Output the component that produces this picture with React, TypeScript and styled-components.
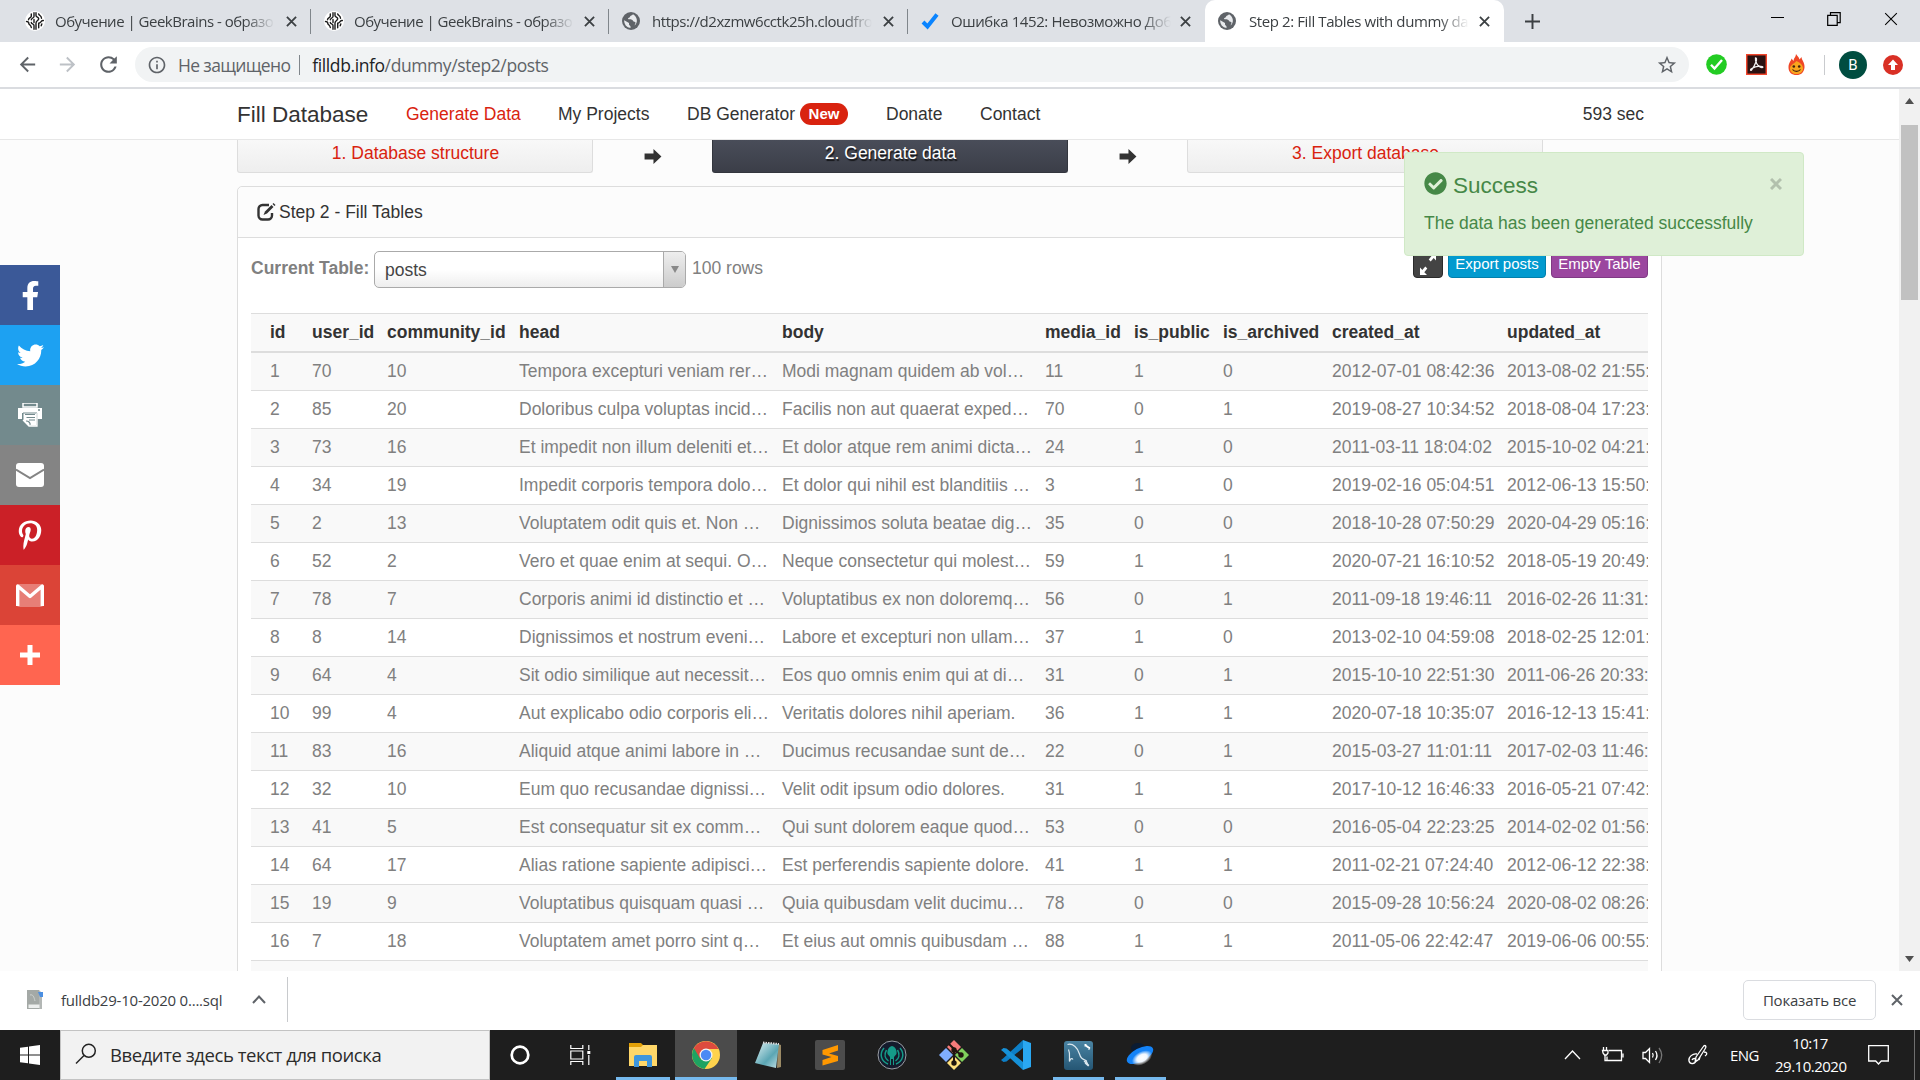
import React from "react";
import styled, { createGlobalStyle } from "styled-components";
import { FaFacebookF, FaTwitter, FaPinterestP, FaCheckCircle } from "react-icons/fa";
import { MdStarBorder, MdRefresh, MdArrowBack, MdArrowForward, MdInfoOutline } from "react-icons/md";

const ui = `"Open Sans", "Noto Sans", sans-serif`;
const web = `"Liberation Sans", Arial, sans-serif`;

const Global = createGlobalStyle`
  * { box-sizing: border-box; }
  body { margin: 0; overflow: hidden; }
  svg { display: block; flex: none; }
`;

const Screen = styled.div`
  width: 1920px;
  height: 1080px;
  display: flex;
  flex-direction: column;
  overflow: hidden;
  background: #fff;
  font-family: ${ui};
`;

/* ---------- browser chrome ---------- */
const TabStrip = styled.div`
  height: 42px;
  flex: none;
  display: flex;
  background: #dee1e6;
  padding-left: 12px;
`;
const Tab = styled.div<{ $active?: boolean; $line?: boolean; $w: number }>`
  width: ${(p) => p.$w}px;
  height: 42px;
  display: flex;
  align-items: center;
  padding: 0 8px 0 13px;
  background: ${(p) => (p.$active ? "#fff" : "transparent")};
  border-radius: 10px 10px 0 0;
  position: relative;
  &::after {
    content: "";
    display: ${(p) => (p.$line ? "block" : "none")};
    position: absolute;
    right: 0;
    top: 9px;
    width: 1px;
    height: 25px;
    background: #80868b;
  }
`;
const TabTitle = styled.div<{ $ls: number; $gap: number }>`
  width: 220px;
  margin-left: ${(p) => p.$gap}px;
  overflow: hidden;
  white-space: nowrap;
  font-size: 15px;
  line-height: 22px;
  letter-spacing: ${(p) => p.$ls}px;
  color: #3c4043;
  mask-image: linear-gradient(to right, #000 190px, transparent 220px);
`;
const TabClose = styled.div`
  margin-left: auto;
  padding-right: 6px;
`;
const NewTab = styled.div`
  display: flex;
  align-items: center;
  padding-left: 21px;
`;
const WindowButtons = styled.div`
  margin-left: auto;
  display: flex;
  align-items: center;
  gap: 43px;
  height: 37px;
  padding-right: 22px;
`;
const Toolbar = styled.div`
  height: 47px;
  flex: none;
  display: flex;
  align-items: center;
  border-bottom: 2px solid #dadce0;
  padding: 0 16px;
  background: #fff;
`;
const NavIcons = styled.div`
  display: flex;
  align-items: center;
  gap: 17px;
  width: 119px;
  color: #5f6368;
`;
const UrlBox = styled.div`
  width: 1554px;
  height: 35px;
  border-radius: 18px;
  background: #f1f3f4;
  display: flex;
  align-items: center;
  padding: 0 12px 0 12px;
  font-size: 17.5px;
  line-height: 24px;
  color: #5f6368;
  white-space: nowrap;
`;
const Secure = styled.span`
  margin-left: 11px;
  letter-spacing: -0.65px;
`;
const UrlLine = styled.i`
  width: 1px;
  height: 20px;
  background: #80868b;
  margin: 0 12px 0 9px;
`;
const Url = styled.span`
  letter-spacing: -0.4px;
  b { font-weight: 400; color: #202124; }
`;
const UrlStar = styled.div`
  margin-left: auto;
  margin-right: -1px;
`;
const Extensions = styled.div`
  margin-left: 17px;
  display: flex;
  align-items: center;
`;
const ExtLine = styled.i`
  width: 1px;
  height: 20px;
  background: #c9cbce;
  margin: 0 14px 0 19px;
`;
const Avatar = styled.div`
  width: 28px;
  height: 28px;
  border-radius: 50%;
  background: #004d40;
  color: #fff;
  font: 15px/28px Roboto, sans-serif;
  text-align: center;
  margin-right: 16px;
`;

/* ---------- page ---------- */
const Viewport = styled.div`
  height: 882px;
  flex: none;
  display: flex;
  position: relative;
  overflow: hidden;
  font-family: ${web};
  font-size: 17.5px;
  line-height: 25px;
  color: #808080;
  background: #fcfcfc;
`;
const Page = styled.div`
  width: 1899px;
  height: 882px;
  overflow: hidden;
`;
const SiteNav = styled.div`
  height: 51px;
  background: #fff;
  border-bottom: 1px solid #e7e7e7;
  display: flex;
  align-items: center;
  padding: 0 255px 0 237px;
  color: #333;
  white-space: nowrap;
`;
const Brand = styled.div`
  font-size: 22.5px;
  width: 169px;
`;
const NavLink = styled.div<{ $w: number; $on?: boolean }>`
  width: ${(p) => p.$w}px;
  display: flex;
  align-items: center;
  color: ${(p) => (p.$on ? "#d9230f" : "#333")};
`;
const Badge = styled.span`
  background: #d9230f;
  color: #fff;
  font-size: 15px;
  font-weight: 700;
  line-height: 22px;
  width: 48px;
  text-align: center;
  border-radius: 12px;
  margin-left: 5px;
`;
const Timer = styled.div`
  margin-left: auto;
`;
const Steps = styled.div`
  display: flex;
  align-items: center;
  padding-left: 237px;
  height: 33px;
`;
const Step = styled.div<{ $dark?: boolean }>`
  width: 356px;
  height: 33px;
  padding: 0 0 6px 1px;
  display: flex;
  align-items: center;
  justify-content: center;
  border: 1px solid ${(p) => (p.$dark ? "#33363e" : "#ddd")};
  border-top: 0;
  border-radius: 0 0 3px 3px;
  color: ${(p) => (p.$dark ? "#fff" : "#d9230f")};
  text-shadow: ${(p) => (p.$dark ? "1px 2px 1px rgba(0,0,0,.7)" : "none")};
  background: ${(p) =>
    p.$dark ? "linear-gradient(#494d59, #3b3e48)" : "linear-gradient(#f8f8f8, #eee)"};
`;
const StepArrow = styled.div`
  width: 119px;
  padding-left: 51px;
`;
const Panel = styled.div`
  width: 1425px;
  height: 800px;
  margin: 13px 0 0 237px;
  border: 1px solid #ddd;
  border-radius: 5px;
  background: #fff;
`;
const PanelHead = styled.div`
  height: 51px;
  display: flex;
  align-items: center;
  padding-left: 19px;
  gap: 3px;
  background: #fcfcfc;
  border-bottom: 1px solid #ddd;
  border-radius: 5px 5px 0 0;
  color: #333;
`;
const Controls = styled.div`
  height: 75px;
  padding: 13px 13px 0 13px;
  display: flex;
  align-items: flex-start;
`;
const TableLabel = styled.b`
  width: 123px;
  line-height: 34px;
  white-space: nowrap;
`;
const Select = styled.div`
  width: 312px;
  height: 37px;
  display: flex;
  border: 1px solid #aaa;
  border-radius: 5px;
  overflow: hidden;
  color: #444;
  background: linear-gradient(#fff 50%, #eee);
`;
const SelectValue = styled.div`
  flex: 1;
  padding-left: 10px;
  line-height: 36px;
`;
const SelectArrow = styled.div`
  width: 22px;
  border-left: 1px solid #aaa;
  background: linear-gradient(#eee, #ccc);
  display: flex;
  align-items: center;
  justify-content: center;
`;
const RowCount = styled.span`
  margin-left: 6px;
  line-height: 34px;
`;
const Actions = styled.div`
  margin-left: auto;
  display: flex;
  gap: 5px;
`;
const Action = styled.div<{ $bg: string; $edge: string; $w: number }>`
  width: ${(p) => p.$w}px;
  height: 27px;
  border-radius: 4px;
  border: 1px solid ${(p) => p.$edge};
  background: ${(p) => p.$bg};
  color: #fff;
  font-size: 15px;
  line-height: 22px;
  padding-bottom: 2px;
  display: flex;
  align-items: center;
  justify-content: center;
  white-space: nowrap;
`;
const TableWrap = styled.div`
  width: 1397px;
  margin-left: 13px;
  overflow: hidden;
`;
const DataTable = styled.table`
  table-layout: fixed;
  width: 1429px;
  border-spacing: 0;
  th, td {
    padding: 6px 0 6px 6px;
    text-align: left;
    white-space: nowrap;
    height: 38px;
    line-height: 25px;
    border-bottom: 1px solid #ddd;
  }
  th:first-child, td:first-child { padding-left: 19px; }
  th {
    height: 40px;
    color: #333;
    background: #f9f9f9;
    border-top: 1px solid #ddd;
    border-bottom: 2px solid #ddd;
  }
  tbody tr:nth-child(odd) td { background: #f9f9f9; }
`;
const Scroll = styled.div`
  width: 21px;
  background: #f1f1f1;
  display: flex;
  flex-direction: column;
  align-items: center;
  padding: 9px 0 9px;
`;
const Thumb = styled.div`
  width: 17px;
  height: 175px;
  margin-top: 21px;
  margin-bottom: auto;
  background: #c1c1c1;
`;
const Share = styled.div`
  position: absolute;
  left: 0;
  top: 176px;
  width: 60px;
`;
const ShareItem = styled.div<{ $bg: string }>`
  height: 60px;
  background: ${(p) => p.$bg};
  color: #fff;
  display: flex;
  align-items: center;
  justify-content: center;
`;
const Alert = styled.div`
  position: absolute;
  left: 1404px;
  top: 63px;
  width: 400px;
  height: 104px;
  padding: 18px 18px 0 19px;
  border: 1px solid #d0e9c6;
  border-radius: 4px;
  background: #dff0d8;
  color: #468847;
  white-space: nowrap;
`;
const AlertTitle = styled.div`
  display: flex;
  align-items: center;
  font-size: 22.5px;
  height: 26px;
  line-height: 30px;
  span { margin: 3px auto 0 6px; }
  svg:first-child { margin-bottom: 2px; }
  svg:last-child { margin-right: 3px; }
`;
const AlertText = styled.div`
  margin-top: 14px;
`;

/* ---------- download shelf ---------- */
const Shelf = styled.div`
  height: 59px;
  flex: none;
  display: flex;
  align-items: center;
  background: #fff;
  padding: 0 17px 2px 26px;
  font-size: 15px;
  color: #3c4043;
`;
const FileName = styled.div`
  width: 191px;
  margin-left: 18px;
  letter-spacing: -0.22px;
  white-space: nowrap;
`;
const ShelfLine = styled.i`
  width: 1px;
  height: 45px;
  margin-left: 21px;
  background: #c8cacd;
`;
const ShowAll = styled.div`
  margin-left: auto;
  margin-right: 15px;
  width: 133px;
  height: 40px;
  border: 1px solid #dadce0;
  border-radius: 5px;
  line-height: 38px;
  text-align: center;
  font-weight: 500;
  letter-spacing: -0.2px;
  white-space: nowrap;
`;

/* ---------- taskbar ---------- */
const Taskbar = styled.div`
  height: 50px;
  flex: none;
  display: flex;
  background: #1e1e1e;
  color: #fff;
`;
const Start = styled.div`
  width: 60px;
  display: flex;
  align-items: center;
  justify-content: center;
`;
const Search = styled.div`
  width: 430px;
  display: flex;
  align-items: center;
  padding: 0 0 2px 14px;
  gap: 13px;
  background: #f2f2f2;
  border: 1px solid #c3c3c3;
  color: #2b2b2b;
  font-size: 18.5px;
  letter-spacing: -0.43px;
  white-space: nowrap;
`;
const AppCell = styled.div<{ $open?: boolean; $on?: boolean; $w?: number }>`
  width: ${(p) => p.$w ?? 62}px;
  display: flex;
  align-items: center;
  justify-content: center;
  position: relative;
  background: ${(p) => (p.$on ? "#4b4b4b" : "transparent")};
  &::after {
    content: "";
    display: ${(p) => (p.$open || p.$on ? "block" : "none")};
    position: absolute;
    bottom: 0;
    left: ${(p) => (p.$on ? 0 : 6)}px;
    right: ${(p) => (p.$on ? 0 : 5)}px;
    height: 3px;
    background: #76b9ed;
  }
`;
const Tray = styled.div`
  margin-left: auto;
  display: flex;
  align-items: center;
  font-size: 15px;
  white-space: nowrap;
`;
const Lang = styled.div`
  width: 29px;
  margin: 0 16px 0 22px;
  letter-spacing: -0.6px;
`;
const Clock = styled.div`
  width: 70px;
  text-align: center;
  line-height: 23px;
  letter-spacing: -0.5px;
  margin-right: 23px;
`;
const DesktopEdge = styled.i`
  width: 1px;
  height: 50px;
  background: #6f6f6f;
  margin: 0 5px 0 25px;
`;

/* ---------- drawings ---------- */
const Brain = () => (
  <svg width="20" height="20" viewBox="0 0 20 20" fill="none">
    <circle cx="10" cy="10" r="10" fill="#fff" />
    <g stroke="#1c1c1c" strokeWidth="1.4" strokeLinecap="round">
      <path d="M9 1.800v3.700c0 1.500-2.700 1.500-2.700 3.300M9 18.200v-3.700c0-2-2.700-1.200-2.700-3M9 8.500v3M6.300 3v2.300c0 1.200-2.800 1.500-2.800 3.500M1.500 10.500c1.500 0 2.300.6 2.300 2s2.200 1.300 2.500 4" />
      <path d="M11 1.800v2.700c0 1.800 2.700 1.500 2.700 3.300S11 9.500 11 12v6.200M13.700 3c.5 1.800 2.800 1.500 2.800 4.200M18.300 9.500c-2.300-.5-1.800 2.200-4.600 2.800v4.500M16.800 13l-.6 1.800" />
    </g>
  </svg>
);
const Globe = () => (
  <svg width="18" height="18" viewBox="0 0 18 18">
    <circle cx="9" cy="9" r="9" fill="#5f6368" />
    <path d="M2.200 8.200 7 11v1.500c0 1 1.500 1 1.500 2V16A7 7 0 0 1 2.200 8.200zM11 2.300c-.5 1.500-3 1-3 2.500 0 1-2 .8-2 2 0 1.300 4.500 0 5 2 .3 1.200 2.500.7 2.500 2 0 1-.8 1.700-.8 2.800A7 7 0 0 0 11 2.300z" fill="#e8eaed" />
  </svg>
);
const Tick = () => (
  <svg width="18" height="18" viewBox="0 0 18 18">
    <path d="M2 10l4.500 4.500L16 2.500" stroke="#0a84ff" strokeWidth="4" fill="none" />
  </svg>
);
const Cross = ({ s = 11, c = "#3c4043", w = 2 }: { s?: number; c?: string; w?: number }) => (
  <svg width={s} height={s} viewBox="0 0 12 12">
    <path d="M1 1l10 10M11 1L1 11" stroke={c} strokeWidth={w} />
  </svg>
);
const ArrowRight = () => (
  <svg width="18" height="15" viewBox="0 0 18 16">
    <path d="M0 4.800h9.500V0L18 8l-8.500 8v-4.800H0z" fill="#333" />
  </svg>
);
const EditIcon = () => (
  <svg width="19" height="18" viewBox="0 0 19 18" fill="none" stroke="#333">
    <path d="M12 2H5.500A4 4 0 0 0 1.500 6v6.500a4 4 0 0 0 4 4H11a4 4 0 0 0 4-4V10" strokeWidth="2.400" />
    <path d="M6.500 12l1.500-3.500L14.500 2l2 2L10 10.500z" fill="#333" stroke="none" />
    <path d="M15.500 1l1-1L18.500 2l-1 1z" fill="#333" stroke="none" />
  </svg>
);
const Expand = () => (
  <svg width="16" height="24" viewBox="0 0 16 24" fill="#fff">
    <path d="M9 1h7v7.500l-2.300-2.500-3 3.600-2-2.200 3-3.700zM7 23H0v-7.500l2.300 2.500 3-3.600 2 2.200-3 3.700z" />
  </svg>
);
const Printer = () => (
  <svg width="24" height="24" viewBox="0 0 24 24">
    <path d="M5 0h14v4H5z" fill="none" stroke="#fff" strokeWidth="1.500" />
    <path d="M0 5h24v11h-5v-6H4v6H0z" fill="#fff" />
    <path d="M5 10h14v13h-8l-6-6z" fill="#fff" stroke="#738a8d" strokeWidth="1" />
    <path d="M7 11.500h10M8.500 14.500H17M11 17h6M12 22c.5-2-1-4-4-4" fill="none" stroke="#738a8d" strokeWidth="1.200" />
    <circle cx="21" cy="7" r="1" fill="#738a8d" />
    <path d="M5 17l6 6h8V10" fill="none" stroke="#fff" strokeWidth="1.300" />
  </svg>
);
const Mail = () => (
  <svg width="28" height="24" viewBox="0 0 28 24">
    <rect width="28" height="24" rx="3" fill="#fff" />
    <path d="M0 6.500L14 15l14-8.500" fill="none" stroke="#848484" strokeWidth="2" />
  </svg>
);
const Gmail = () => (
  <svg width="28" height="23" viewBox="0 0 28 23">
    <rect x="1" width="26" height="23" rx="2" fill="#e77e76" />
    <path d="M1.700 22V2L14 12.500 26.300 2v20" fill="none" stroke="#fff" strokeWidth="3.400" strokeLinejoin="round" />
  </svg>
);
const Plus = ({ s, w, c }: { s: number; w: number; c: string }) => (
  <svg width={s} height={s} viewBox="0 0 20 20">
    <path d="M10 0v20M0 10h20" stroke={c} strokeWidth={w} />
  </svg>
);
const Triangle = ({ w, h, down, c }: { w: number; h: number; down?: boolean; c: string }) => (
  <svg width={w} height={h} viewBox="0 0 10 10" preserveAspectRatio="none">
    <path d={down ? "M0 0h10L5 10z" : "M0 10h10L5 0z"} fill={c} />
  </svg>
);
const ExtCheck = () => (
  <svg width="21" height="21" viewBox="0 0 21 21">
    <circle cx="10.500" cy="10.500" r="10.300" fill="#23cc23" />
    <path d="M5 10.800l3.500 3.700L16 6" fill="none" stroke="#fff" strokeWidth="2.400" />
  </svg>
);
const Acrobat = () => (
  <svg width="21" height="21" viewBox="0 0 21 21">
    <rect x=".7" y=".7" width="19.600" height="19.600" fill="#2a1212" stroke="#f0452c" strokeWidth="1.500" />
    <path d="M9.500 4c2.500-.3 0 7-4 12-1 1-1.500-.2-.2-1.200 3-2 8-3.200 11-2.300 1.500.8-.3 1.500-2 .7C11.500 12 9 7.500 9.500 4z" fill="none" stroke="#f2eeee" strokeWidth="1.300" />
  </svg>
);
const Flame = () => (
  <svg width="17" height="21" viewBox="0 0 17 21">
    <path d="M8 0c1 2 3 3 3.500 5.500L13.500 3c0 3 3.500 5.500 3 10.500S13 21 8.500 21 .5 18.500.5 13.500 3 7.500 3.500 4.500L5.500 7C5.500 4 8 3 8 0z" fill="#ef4726" />
    <path d="M8.500 7c4 2 6.500 4 6.500 7.500S12 20 8.500 20 2 18 2 14.500 6 10 8.500 7z" fill="#f9a51d" />
    <circle cx="5.800" cy="12.500" r="1.300" fill="#40200e" />
    <circle cx="11.200" cy="12.500" r="1.300" fill="#40200e" />
    <path d="M4.500 15.500c2 2.500 6 2.500 8 0" fill="none" stroke="#40200e" strokeWidth="1.200" />
  </svg>
);
const UpdateBadge = () => (
  <svg width="20" height="20" viewBox="0 0 20 20">
    <circle cx="10" cy="10" r="10" fill="#d93025" />
    <path d="M10 4.500l5 5.500h-3v5H8v-5H5z" fill="#fff" />
  </svg>
);
const FileIcon = () => (
  <svg width="17" height="20" viewBox="0 0 17 20">
    <path d="M1 0h12l3 3v16H1z" fill="#b3b7b5" />
    <path d="M1 0h12v19H1z" fill="#a4a9a6" />
    <path d="M12 2h5v5h-3z" fill="#4b8fe2" />
    <path d="M2.500 14.500h11V18h-11z" fill="#eceeed" />
    <path d="M4 5c3-1 4 2 5 6" fill="none" stroke="#cdd2cf" />
  </svg>
);
const Chevron = ({ w, h, c, sw }: { w: number; h: number; c: string; sw: number }) => (
  <svg width={w} height={h} viewBox={`0 0 ${w} ${h}`}>
    <path d={`M1 ${h - 1}L${w / 2} 1.500 ${w - 1} ${h - 1}`} fill="none" stroke={c} strokeWidth={sw} />
  </svg>
);
const WinLogo = () => (
  <svg width="20" height="20" viewBox="0 0 20 20" fill="#fff">
    <path d="M0 2.800l8-1.100v7.800H0zM9 1.500L20 0v9.500H9zM0 10.500h8v7.800l-8-1.100zM9 10.500h11V20L9 18.500z" />
  </svg>
);
const Loupe = () => (
  <svg width="22" height="22" viewBox="0 0 22 22" fill="none" stroke="#222" strokeWidth="1.500">
    <circle cx="13.800" cy="7.800" r="6.500" />
    <path d="M9 12.500l-8 8" />
  </svg>
);
const Cortana = () => (
  <svg width="20" height="20" viewBox="0 0 20 20">
    <circle cx="10" cy="10" r="8.300" fill="none" stroke="#fff" strokeWidth="2.700" />
  </svg>
);
const TaskView = () => (
  <svg width="21" height="20" viewBox="0 0 21 20" fill="none" stroke="#fff" strokeWidth="1.200">
    <path d="M.8 0v3.500h12V0M.8 20v-3.500h12V20M.8 6h12v8H.8zM18.800 0v5M18.800 10v10" />
    <path d="M17.300 6h3v3h-3z" fill="#fff" stroke="none" />
  </svg>
);
const Folder = () => (
  <svg width="28" height="25" viewBox="0 0 28 25">
    <path d="M0 0h12l2 2v4H0z" fill="#e2a007" />
    <path d="M0 4h12l2-2h14v21H0z" fill="#ffd769" />
    <path d="M5 24V14a2 2 0 0 1 2-2h14a2 2 0 0 1 2 2v10h-5v-6h-8v6z" fill="#3f96dd" />
  </svg>
);
const ChromeIcon = () => (
  <svg width="28" height="28" viewBox="0 0 28 28">
    <circle cx="14" cy="14" r="14" fill="#ffd34d" />
    <path d="M14 14L1.900 7A14 14 0 0 0 12.500 27.900L20 17z" fill="#1ea362" />
    <path d="M14 14L8 17.500 1.900 7a14 14 0 0 1 24.200 0.500L27 8H14z" fill="#dd4b3e" />
    <circle cx="14" cy="14" r="6.500" fill="#f4f4f4" />
    <circle cx="14" cy="14" r="5.200" fill="#4a8af4" />
  </svg>
);
const Notepad = () => (
  <svg width="28" height="28" viewBox="0 0 28 28">
    <defs>
      <linearGradient id="np" x1="0" y1="0" x2="1" y2="1">
        <stop offset="0" stopColor="#dff1f3" /><stop offset=".6" stopColor="#5ba6b4" /><stop offset="1" stopColor="#c5e1e5" />
      </linearGradient>
    </defs>
    <path d="M24 3l3 1v22l-4 1z" fill="#9b8a65" />
    <path d="M9 2l16 1-3 24L1 22z" fill="url(#np)" />
    <path d="M9 1.500l16 1.500" stroke="#ddd" strokeWidth="2" strokeDasharray="1.500 1" />
  </svg>
);
const Sublime = () => (
  <svg width="30" height="30" viewBox="0 0 30 30">
    <rect width="30" height="30" rx="2" fill="#4c4c4c" />
    <path d="M7.500 10L23 5v5.500l-9 3 9 2.500v5L7.500 25.500V20l9-3-9-2.500z" fill="#ff9800" />
  </svg>
);
const Kraken = () => (
  <svg width="30" height="30" viewBox="0 0 30 30">
    <circle cx="15" cy="15" r="14" fill="#141b2c" stroke="#9a9da4" strokeWidth="1" />
    <path d="M15 6c4 1 5 5 4.500 8L17 17v8h-1v-6h-2v6h-1v-8l-2.500-3C10 11 11 7 15 6z" fill="#159a88" />
    <path d="M7 8c-5 6-3 13 4 16M9.500 10c-3 5-1 9 2 11M23 8c5 6 3 13-4 16M20.500 10c3 5 1 9-2 11" fill="none" stroke="#159a88" strokeWidth="1.500" />
  </svg>
);
const GitIcon = () => (
  <svg width="32" height="32" viewBox="0 0 32 32">
    <path d="M16 1l7 7-7 7-7-7z" fill="#f77b7b" />
    <path d="M24 9l7 7-7 7-7-7z" fill="#7fcf5c" />
    <path d="M8 9l7 7-7 7-7-7z" fill="#80aeff" />
    <path d="M16 17l7 7-7 7-7-7z" fill="#ffe07c" />
    <path d="M11 5l5 5v13M16 10l7 6" stroke="#20160f" strokeWidth="2" fill="none" />
    <circle cx="16" cy="11" r="2.700" fill="#20160f" />
    <circle cx="23" cy="16" r="2.700" fill="#20160f" />
    <circle cx="16" cy="24" r="2.700" fill="#20160f" />
  </svg>
);
const Code = () => (
  <svg width="30" height="30" viewBox="0 0 30 30">
    <path d="M22 0L2 18.500 0 20l2.500 2 3-.5L22 8z" fill="#0d7fc7" />
    <path d="M22 30L2 11.500 0 10l2.500-2 3 .5L22 22z" fill="#1691d8" />
    <path d="M22 0l8 3v24l-8 3z" fill="#2aa8f2" />
  </svg>
);
const Workbench = () => (
  <svg width="29" height="29" viewBox="0 0 29 29">
    <defs>
      <linearGradient id="wb" x1="0" y1="0" x2="0" y2="1">
        <stop offset="0" stopColor="#4a84a3" /><stop offset="1" stopColor="#255674" />
      </linearGradient>
    </defs>
    <rect width="29" height="29" rx="3" fill="url(#wb)" />
    <path d="M3.500 3.500C9 2 14 7 15.500 13c1 4 3 5 6.500 6.500l-1.500 1L25 24.500M9 18.500C7 16 6 19 5.500 20.500 5 16 6.500 13 4.500 8.500M22 19.500l2.500 5.500-3.500-3" fill="none" stroke="#dbe7ee" strokeWidth="1.200" />
    <path d="M21 4l5 3.500M21.500 3v2.500M25 6v2.500" stroke="#fff" strokeWidth="2" />
  </svg>
);
const Ufo = () => (
  <svg width="30" height="30" viewBox="0 0 30 30">
    <defs>
      <radialGradient id="uf">
        <stop offset="0" stopColor="#fff" /><stop offset=".5" stopColor="#f2f8ff" /><stop offset="1" stopColor="#fff" stopOpacity="0" />
      </radialGradient>
    </defs>
    <ellipse cx="13" cy="8" rx="7" ry="5" fill="#0b1c33" />
    <ellipse cx="15" cy="15" rx="14.500" ry="6.800" transform="rotate(-28 15 15)" fill="#1483f7" />
    <ellipse cx="17" cy="18" rx="11" ry="6.500" transform="rotate(-28 17 18)" fill="url(#uf)" />
  </svg>
);
const TrayIcons = () => (
  <svg width="144" height="24" viewBox="0 0 144 24" fill="none" stroke="#fff" strokeWidth="1.300">
    <path d="M1 16l7.500-8 7.500 8" />
    <path d="M45 7.500h12.500v10H43v-4M59 10.500v4M39.500 4v4M42.500 4v4M38.500 7.500h5.500v2.500l-1.500 2h-2l-1.500-2zM41 12v5.500h3" />
    <path d="M79 9.500h2.500l4-4v14l-4-4H79zM88.500 10c1 1.500 1 3 0 4.500M91.500 8c2 3 2 6 0 9" />
    <path d="M95 5c3.500 4.500 3.500 10 0 15" stroke="#777" />
    <path d="M132 14l7-10c2-3 4-1 2 2l-7 11-3 2zM133 11c-4-1-9 3-8 7s7 3 7-1c0-2-3-2-4 0M140 9c3 0 4 2 1 4M136 14l-1 3" />
  </svg>
);
const ActionCenter = () => (
  <svg width="21" height="20" viewBox="0 0 21 20" fill="none" stroke="#fff" strokeWidth="1.300">
    <path d="M.7.700h19.600v15.300h-7L10.500 19l-2.800-3h-7z" />
  </svg>
);

/* ---------- data ---------- */
const columns: [string, number][] = [
  ["id", 55], ["user_id", 75], ["community_id", 132], ["head", 263], ["body", 263],
  ["media_id", 89], ["is_public", 89], ["is_archived", 109], ["created_at", 175], ["updated_at", 179],
];
const rows = [
  "1|70|10|Tempora excepturi veniam rer…|Modi magnam quidem ab vol…|11|1|0|2012-07-01 08:42:36|2013-08-02 21:55:",
  "2|85|20|Doloribus culpa voluptas incid…|Facilis non aut quaerat exped…|70|0|1|2019-08-27 10:34:52|2018-08-04 17:23:",
  "3|73|16|Et impedit non illum deleniti et…|Et dolor atque rem animi dicta…|24|1|0|2011-03-11 18:04:02|2015-10-02 04:21:",
  "4|34|19|Impedit corporis tempora dolo…|Et dolor qui nihil est blanditiis …|3|1|0|2019-02-16 05:04:51|2012-06-13 15:50:",
  "5|2|13|Voluptatem odit quis et. Non …|Dignissimos soluta beatae dig…|35|0|0|2018-10-28 07:50:29|2020-04-29 05:16:",
  "6|52|2|Vero et quae enim at sequi. O…|Neque consectetur qui molest…|59|1|1|2020-07-21 16:10:52|2018-05-19 20:49:",
  "7|78|7|Corporis animi id distinctio et …|Voluptatibus ex non doloremq…|56|0|1|2011-09-18 19:46:11|2016-02-26 11:31:",
  "8|8|14|Dignissimos et nostrum eveni…|Labore et excepturi non ullam…|37|1|0|2013-02-10 04:59:08|2018-02-25 12:01:",
  "9|64|4|Sit odio similique aut necessit…|Eos quo omnis enim qui at di…|31|0|1|2015-10-10 22:51:30|2011-06-26 20:33:",
  "10|99|4|Aut explicabo odio corporis eli…|Veritatis dolores nihil aperiam.|36|1|1|2020-07-18 10:35:07|2016-12-13 15:41:",
  "11|83|16|Aliquid atque animi labore in …|Ducimus recusandae sunt de…|22|0|1|2015-03-27 11:01:11|2017-02-03 11:46:",
  "12|32|10|Eum quo recusandae dignissi…|Velit odit ipsum odio dolores.|31|1|1|2017-10-12 16:46:33|2016-05-21 07:42:",
  "13|41|5|Est consequatur sit ex comm…|Qui sunt dolorem eaque quod…|53|0|0|2016-05-04 22:23:25|2014-02-02 01:56:",
  "14|64|17|Alias ratione sapiente adipisci…|Est perferendis sapiente dolore.|41|1|1|2011-02-21 07:24:40|2012-06-12 22:38:",
  "15|19|9|Voluptatibus quisquam quasi …|Quia quibusdam velit ducimu…|78|0|0|2015-09-28 10:56:24|2020-08-02 08:26:",
  "16|7|18|Voluptatem amet porro sint q…|Et eius aut omnis quibusdam …|88|1|1|2011-05-06 22:42:47|2019-06-06 00:55:",
  "|||||||||",
].map((r) => r.split("|"));

const tabs = [
  { icon: <Brain />, title: "Обучение | GeekBrains - образо", ls: -0.5, w: 299, gap: 10, line: true },
  { icon: <Brain />, title: "Обучение | GeekBrains - образо", ls: -0.5, w: 298, gap: 10, line: true },
  { icon: <Globe />, title: "https://d2xzmw6cctk25h.cloudfro", ls: -0.45, w: 299, gap: 12, line: true },
  { icon: <Tick />, title: "Ошибка 1452: Невозможно Доб", ls: -0.4, w: 297, gap: 12 },
  { icon: <Globe />, title: "Step 2: Fill Tables with dummy da", ls: -0.4, w: 299, gap: 13, active: true },
];

export default function App() {
  return (
    <Screen>
      <Global />
      <TabStrip>
        {tabs.map((t, i) => (
          <Tab key={i} $w={t.w} $active={t.active} $line={t.line}>
            {t.icon}
            <TabTitle $ls={t.ls} $gap={t.gap}>{t.title}</TabTitle>
            <TabClose><Cross /></TabClose>
          </Tab>
        ))}
        <NewTab><Plus s={15} w={2.6} c="#3c4043" /></NewTab>
        <WindowButtons>
          <svg width="13" height="13" viewBox="0 0 13 13"><path d="M0 5.500h13" stroke="#000" /></svg>
          <svg width="14" height="14" viewBox="0 0 14 14" fill="none" stroke="#000" strokeWidth="1.200">
            <path d="M.7 3.300h9.500v10H.7zM3.500 3V.7h9.700v10h-2.700" />
          </svg>
          <Cross s={14} c="#000" w={0.9} />
        </WindowButtons>
      </TabStrip>
      <Toolbar>
        <NavIcons>
          <MdArrowBack size={23} />
          <MdArrowForward size={23} color="#bdc1c6" />
          <MdRefresh size={25} />
        </NavIcons>
        <UrlBox>
          <MdInfoOutline size={20} />
          <Secure>Не защищено</Secure>
          <UrlLine />
          <Url><b>filldb.info</b>/dummy/step2/posts</Url>
          <UrlStar><MdStarBorder size={22} /></UrlStar>
        </UrlBox>
        <Extensions>
          <ExtCheck />
          <svg width="19" height="1" />
          <Acrobat />
          <svg width="21" height="1" />
          <Flame />
          <ExtLine />
          <Avatar>В</Avatar>
          <UpdateBadge />
        </Extensions>
      </Toolbar>

      <Viewport>
        <Page>
          <SiteNav>
            <Brand>Fill Database</Brand>
            <NavLink $w={152} $on>Generate Data</NavLink>
            <NavLink $w={129}>My Projects</NavLink>
            <NavLink $w={199}>DB Generator<Badge>New</Badge></NavLink>
            <NavLink $w={94}>Donate</NavLink>
            <NavLink $w={80}>Contact</NavLink>
            <Timer>593 sec</Timer>
          </SiteNav>
          <Steps>
            <Step>1. Database structure</Step>
            <StepArrow><ArrowRight /></StepArrow>
            <Step $dark>2. Generate data</Step>
            <StepArrow><ArrowRight /></StepArrow>
            <Step>3. Export database</Step>
          </Steps>
          <Panel>
            <PanelHead><EditIcon />Step 2 - Fill Tables</PanelHead>
            <Controls>
              <TableLabel>Current Table:</TableLabel>
              <Select>
                <SelectValue>posts</SelectValue>
                <SelectArrow><Triangle w={8} h={7} down c="#888" /></SelectArrow>
              </Select>
              <RowCount>100 rows</RowCount>
              <Actions>
                <Action $w={30} $bg="#444" $edge="#2b2b2b"><Expand /></Action>
                <Action $w={98} $bg="#029acf" $edge="#0280ac">Export posts</Action>
                <Action $w={97} $bg="#9b479f" $edge="#803a84">Empty Table</Action>
              </Actions>
            </Controls>
            <TableWrap>
              <DataTable>
                <colgroup>
                  {columns.map(([name, w]) => <col key={name} width={w} />)}
                </colgroup>
                <thead>
                  <tr>{columns.map(([name]) => <th key={name}>{name}</th>)}</tr>
                </thead>
                <tbody>
                  {rows.map((r, i) => (
                    <tr key={i}>{r.map((c, j) => <td key={j}>{c}</td>)}</tr>
                  ))}
                </tbody>
              </DataTable>
            </TableWrap>
          </Panel>
        </Page>
        <Scroll>
          <Triangle w={9} h={6} c="#505050" />
          <Thumb />
          <Triangle w={9} h={6} down c="#505050" />
        </Scroll>
        <Share>
          <ShareItem $bg="#3b5998"><FaFacebookF size={29} /></ShareItem>
          <ShareItem $bg="#1da1f2"><FaTwitter size={27} /></ShareItem>
          <ShareItem $bg="#738a8d"><Printer /></ShareItem>
          <ShareItem $bg="#848484"><Mail /></ShareItem>
          <ShareItem $bg="#cb2027"><FaPinterestP size={30} /></ShareItem>
          <ShareItem $bg="#db4437"><Gmail /></ShareItem>
          <ShareItem $bg="#ff6550"><Plus s={20} w={5} c="#fff" /></ShareItem>
        </Share>
        <Alert>
          <AlertTitle>
            <FaCheckCircle size={23} />
            <span>Success</span>
            <Cross s={12} c="#b2c0ad" w={3} />
          </AlertTitle>
          <AlertText>The data has been generated successfully</AlertText>
        </Alert>
      </Viewport>

      <Shelf>
        <FileIcon />
        <FileName>fulldb29-10-2020 0....sql</FileName>
        <Chevron w={14} h={9} c="#5f6368" sw={2} />
        <ShelfLine />
        <ShowAll>Показать все</ShowAll>
        <Cross s={12} c="#5f6368" w={2} />
      </Shelf>

      <Taskbar>
        <Start><WinLogo /></Start>
        <Search><Loupe />Введите здесь текст для поиска</Search>
        <AppCell $w={60}><Cortana /></AppCell>
        <AppCell $w={60}><TaskView /></AppCell>
        <AppCell $w={65} $open><Folder /></AppCell>
        <AppCell $on><ChromeIcon /></AppCell>
        <AppCell><Notepad /></AppCell>
        <AppCell><Sublime /></AppCell>
        <AppCell><Kraken /></AppCell>
        <AppCell><GitIcon /></AppCell>
        <AppCell><Code /></AppCell>
        <AppCell $open><Workbench /></AppCell>
        <AppCell $open><Ufo /></AppCell>
        <Tray>
          <TrayIcons />
          <Lang>ENG</Lang>
          <Clock>10:17<br />29.10.2020</Clock>
          <ActionCenter />
          <DesktopEdge />
        </Tray>
      </Taskbar>
    </Screen>
  );
}
